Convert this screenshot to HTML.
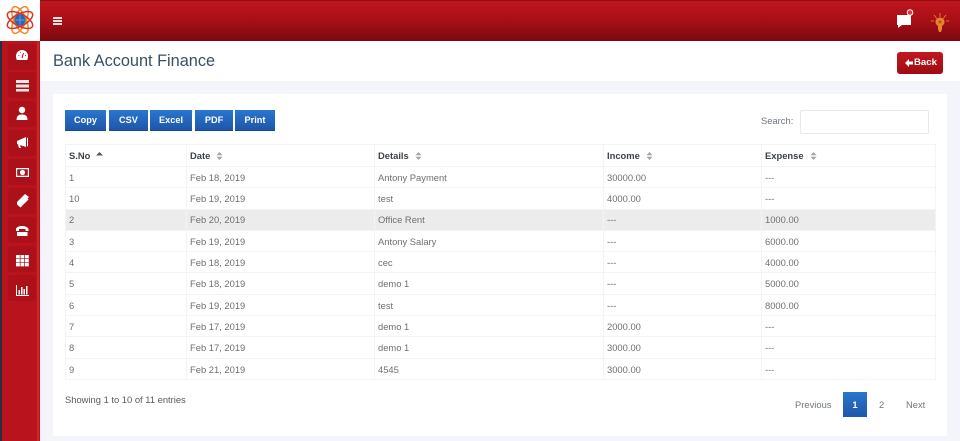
<!DOCTYPE html>
<html><head><meta charset="utf-8"><style>
*{box-sizing:border-box}
html,body{margin:0;padding:0}
body{width:960px;height:441px;overflow:hidden;position:relative;background:#f3f5fa;font-family:"Liberation Sans",sans-serif;color:#6c757d;font-size:10px}
.a{position:absolute}
.top{left:40px;top:0;width:920px;height:41px;background:linear-gradient(#c0151e,#a80f17 50%,#7a090e);border-top:1px solid #8f0d13}
.logo{left:0;top:0;width:40px;height:41px;background:#fff}
.side{left:0;top:41px;width:40px;height:400px;background:linear-gradient(90deg,#24303f 0,#24303f 2px,#b9141d 2px,#b9141d 37px,#d5232c 37px,#d5232c 39px,#b9141d 39px)}
.ib{left:8px;width:28px;height:26px;background:#ac1019;border-radius:3px}
.ic{left:0;top:0}
.head{left:40px;top:41px;width:920px;height:40px;background:#fff}
h1{position:absolute;left:53px;top:51px;margin:0;font-weight:400;font-size:16.3px;line-height:20px;color:#3a5064}
.back{left:897px;top:52px;width:46px;height:22px;border-radius:3px;background:linear-gradient(#c41720,#9d0c13);color:#fff;font-weight:700;font-size:9.6px;line-height:22px;padding-left:17px}
.card{left:53px;top:94px;width:894px;height:342px;background:#fff}
.btn{top:110px;height:21px;background:linear-gradient(#2a76cf,#1e57a8);border-bottom:1px solid #174a90;color:#fff;font-weight:700;font-size:9.2px;line-height:21px;text-align:center}
.search{left:800px;top:110px;width:129px;height:24px;background:#fff;border:1px solid #e6e9ed;border-radius:2px}
table{position:absolute;left:65px;top:144px;width:870px;border-collapse:collapse;table-layout:fixed;font-size:9.4px;color:#6b7074}
td,th{height:21.3px;padding:.5px 3px 0;border:1px solid #f3f4f6;text-align:left;white-space:nowrap}
th{height:22px;color:#3d4349;font-weight:700;padding-top:0;padding-bottom:1px}
tr.g td{background:#ececec}
.s{display:inline-block;margin-left:6px;vertical-align:-1px}
.pg{top:392px;height:25px;line-height:25px;font-size:9.4px;color:#6f767c}
</style></head><body>
<div class="a top"></div>
<div class="a logo"><svg width="40" height="41" viewBox="0 0 40 41"><g fill="none" stroke-width="1.500"><ellipse cx="20" cy="20" rx="6" ry="14.500" stroke="#ee8a26" transform="rotate(-25 20 20)"/><ellipse cx="20" cy="20" rx="6" ry="14.500" stroke="#ee8a26" transform="rotate(25 20 20)"/><ellipse cx="20" cy="20" rx="6" ry="14" stroke="#d8342c" transform="rotate(62 20 20)"/><ellipse cx="20" cy="20" rx="6" ry="14" stroke="#d8342c" transform="rotate(-62 20 20)"/></g><circle cx="20" cy="20" r="5.500" fill="#2767b8"/><path d="M15.500 20h9M20 15.500v9" stroke="#7fb0e0" stroke-width=".7"/></svg></div>
<svg class="a" style="left:53px;top:17px" width="9" height="8"><path d="M0 0h9v2H0zM0 3h9v2H0zM0 6h9v2H0z" fill="#f3e0e0"/></svg>
<svg class="a" style="left:895px;top:8px" width="24" height="22"><path d="M2 7h14v10H7l-4 3v-3H2z" fill="#fff"/><circle cx="15" cy="4.500" r="2.800" fill="#e0383c" stroke="#fff" stroke-width="1"/></svg>
<svg class="a" style="left:930px;top:12px" width="20" height="22"><path d="M10 1v4M4 3l3 4M16 3l-3 4M1 9h3M19 9h-3" stroke="#d9772a" stroke-width="1"/><circle cx="10" cy="10" r="4.500" fill="#e8842c"/><path d="M8 13h4v4l-1 3h-2l-1-3z" fill="#e8842c"/><circle cx="10" cy="10" r="1.500" fill="#b8521f"/></svg>
<div class="a side"></div>
<div class="a ib" style="top:44px"></div><div class="a ib" style="top:72px"></div><div class="a ib" style="top:101px"></div><div class="a ib" style="top:130px"></div><div class="a ib" style="top:159px"></div><div class="a ib" style="top:188px"></div><div class="a ib" style="top:217px"></div><div class="a ib" style="top:246px"></div><div class="a ib" style="top:275px"></div>
<svg class="a ic" width="40" height="300" fill="#fff">
<path d="M16 56a6 6 0 0 1 12 0c0 1.500-.3 3-.8 4H16.800c-.5-1-.8-2.500-.8-4z"/><path d="M22 58l1.500-5M18.500 55.500h.8M25 55.500h.8M20 52.500h.6" stroke="#ac1019" stroke-width="1"/>
<path d="M16 80h13v3H16zM16 84.500h13v3H16zM16 89h13v2.500H16z" fill-opacity=".9"/>
<circle cx="22" cy="110" r="3.200"/><path d="M16.500 120c0-4 2-5.500 5.500-5.500s5.500 1.500 5.500 5.500z"/>
<path d="M17 141l9-4v10l-9-3zM27 138l1-.5v9l-1-.5zM18 144.500l2 .5 1 3h-2z"/>
<path fill-rule="evenodd" d="M16 168h13v9H16zM17.200 169.200v6.600h10.600v-6.600z"/><circle cx="22.500" cy="172.500" r="2.600"/>
<path d="M17 202l8-8 4 3-1.500 1.500 1 1-8 8-3.500-3z"/>
<path d="M16 229c1-4 11-4 12.500 0v2h-3v-2h-6.500v2h-3zM17 232h10.500v4H17z"/>
<path d="M16 255h3.800v3.400H16zM20.500 255h3.800v3.400h-3.800zM25 255h3.800v3.400H25zM16 259h3.800v3.400H16zM20.500 259h3.800v3.400h-3.800zM25 259h3.800v3.400H25zM16 263h3.800v3.400H16zM20.500 263h3.800v3.400h-3.800zM25 263h3.800v3.400H25z"/>
<path d="M16 285h1v10h12v1H16zM18.500 290h1.500v4.500h-1.500zM21 287h1.500v7.500H21zM23.500 289h1.500v5.500h-1.500zM26 286h1.500v8.500H26z"/>
</svg>
<div class="a head"></div>
<h1>Bank Account Finance</h1>
<div class="a back">Back<svg class="a" style="left:8px;top:7px" width="8" height="8"><path d="M4 0L0 4l4 4V5.500h4v-3H4z" fill="#fff"/></svg></div>
<div class="a card"></div>
<div class="a btn" style="left:65px;width:41px">Copy</div>
<div class="a btn" style="left:109px;width:39px">CSV</div>
<div class="a btn" style="left:150px;width:42px">Excel</div>
<div class="a btn" style="left:195px;width:38px">PDF</div>
<div class="a btn" style="left:235px;width:40px">Print</div>
<div class="a" style="left:761px;top:115px;font-size:9.4px">Search:</div>
<div class="a search"></div>
<table>
<colgroup><col style="width:121px"><col style="width:188px"><col style="width:229px"><col style="width:158px"><col style="width:174px"></colgroup>
<tr><th>S.No<svg class="s" width="7" height="8"><path d="M0 3.500L3.500 0 7 3.500z" fill="#555"/></svg></th><th>Date<svg class="s" width="7" height="8"><path d="M.5 3.300L3.500 0l3 3.300zM.5 4.700L3.500 8l3-3.300z" fill="#a0a5aa"/></svg></th><th>Details<svg class="s" width="7" height="8"><path d="M.5 3.300L3.500 0l3 3.300zM.5 4.700L3.500 8l3-3.300z" fill="#a0a5aa"/></svg></th><th>Income<svg class="s" width="7" height="8"><path d="M.5 3.300L3.500 0l3 3.300zM.5 4.700L3.500 8l3-3.300z" fill="#a0a5aa"/></svg></th><th>Expense<svg class="s" width="7" height="8"><path d="M.5 3.300L3.500 0l3 3.300zM.5 4.700L3.500 8l3-3.300z" fill="#a0a5aa"/></svg></th></tr>
<tr><td>1</td><td>Feb 18, 2019</td><td>Antony Payment</td><td>30000.00</td><td>---</td></tr>
<tr><td>10</td><td>Feb 19, 2019</td><td>test</td><td>4000.00</td><td>---</td></tr>
<tr class="g"><td>2</td><td>Feb 20, 2019</td><td>Office Rent</td><td>---</td><td>1000.00</td></tr>
<tr><td>3</td><td>Feb 19, 2019</td><td>Antony Salary</td><td>---</td><td>6000.00</td></tr>
<tr><td>4</td><td>Feb 18, 2019</td><td>cec</td><td>---</td><td>4000.00</td></tr>
<tr><td>5</td><td>Feb 18, 2019</td><td>demo 1</td><td>---</td><td>5000.00</td></tr>
<tr><td>6</td><td>Feb 19, 2019</td><td>test</td><td>---</td><td>8000.00</td></tr>
<tr><td>7</td><td>Feb 17, 2019</td><td>demo 1</td><td>2000.00</td><td>---</td></tr>
<tr><td>8</td><td>Feb 17, 2019</td><td>demo 1</td><td>3000.00</td><td>---</td></tr>
<tr><td>9</td><td>Feb 21, 2019</td><td>4545</td><td>3000.00</td><td>---</td></tr>
</table>
<div class="a" style="left:65px;top:394px;font-size:9.4px;color:#555b60">Showing 1 to 10 of 11 entries</div>
<div class="a pg" style="left:795px">Previous</div>
<div class="a pg" style="left:843px;width:24px;background:linear-gradient(#2a76cf,#1e57a8);color:#fff;font-weight:700;text-align:center">1</div>
<div class="a pg" style="left:879px">2</div>
<div class="a pg" style="left:906px">Next</div>
</body></html>
